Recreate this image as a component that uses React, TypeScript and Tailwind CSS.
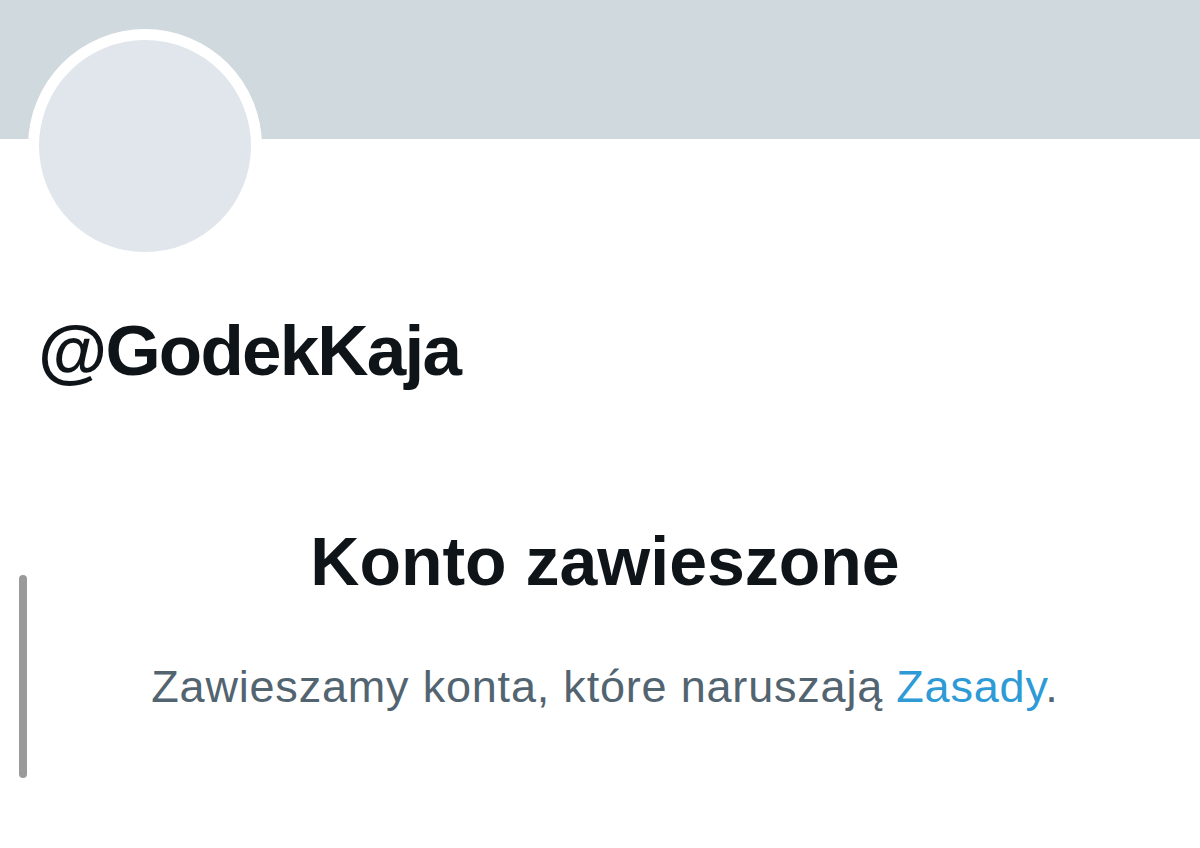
export default function App() {
  return (
    <div className="relative w-[1200px] h-[848px] bg-white overflow-hidden" style={{ fontFamily: '"Liberation Sans", Arial, sans-serif' }}>
      <div className="h-[139px] bg-[#cfd9de]" />
      <div className="pl-[28px] -mt-[110px]">
        <div className="w-[234px] h-[234px] rounded-full bg-white p-[11px]">
          <div className="w-full h-full rounded-full bg-[#e0e6eb]" />
        </div>
      </div>
      <div className="pl-[38px] mt-[52px] text-[71px] leading-none font-bold text-[#0f1419] tracking-[-1.8px]">@GodekKaja</div>
      <div className="mt-[141px] pl-[10px] flex flex-col items-center">
        <div className="text-[68px] leading-none font-bold text-[#0f1419]">Konto zawieszone</div>
        <div className="mt-[69px] text-[45px] leading-none text-[#536471] tracking-[0.8px]">
          Zawieszamy konta, które naruszają <span className="text-[#2e9ad6]">Zasady</span>.
        </div>
      </div>
      <div className="absolute left-[19px] top-[575px] w-[8px] h-[203px] rounded-full bg-[#9a9a9a]" />
    </div>
  );
}
